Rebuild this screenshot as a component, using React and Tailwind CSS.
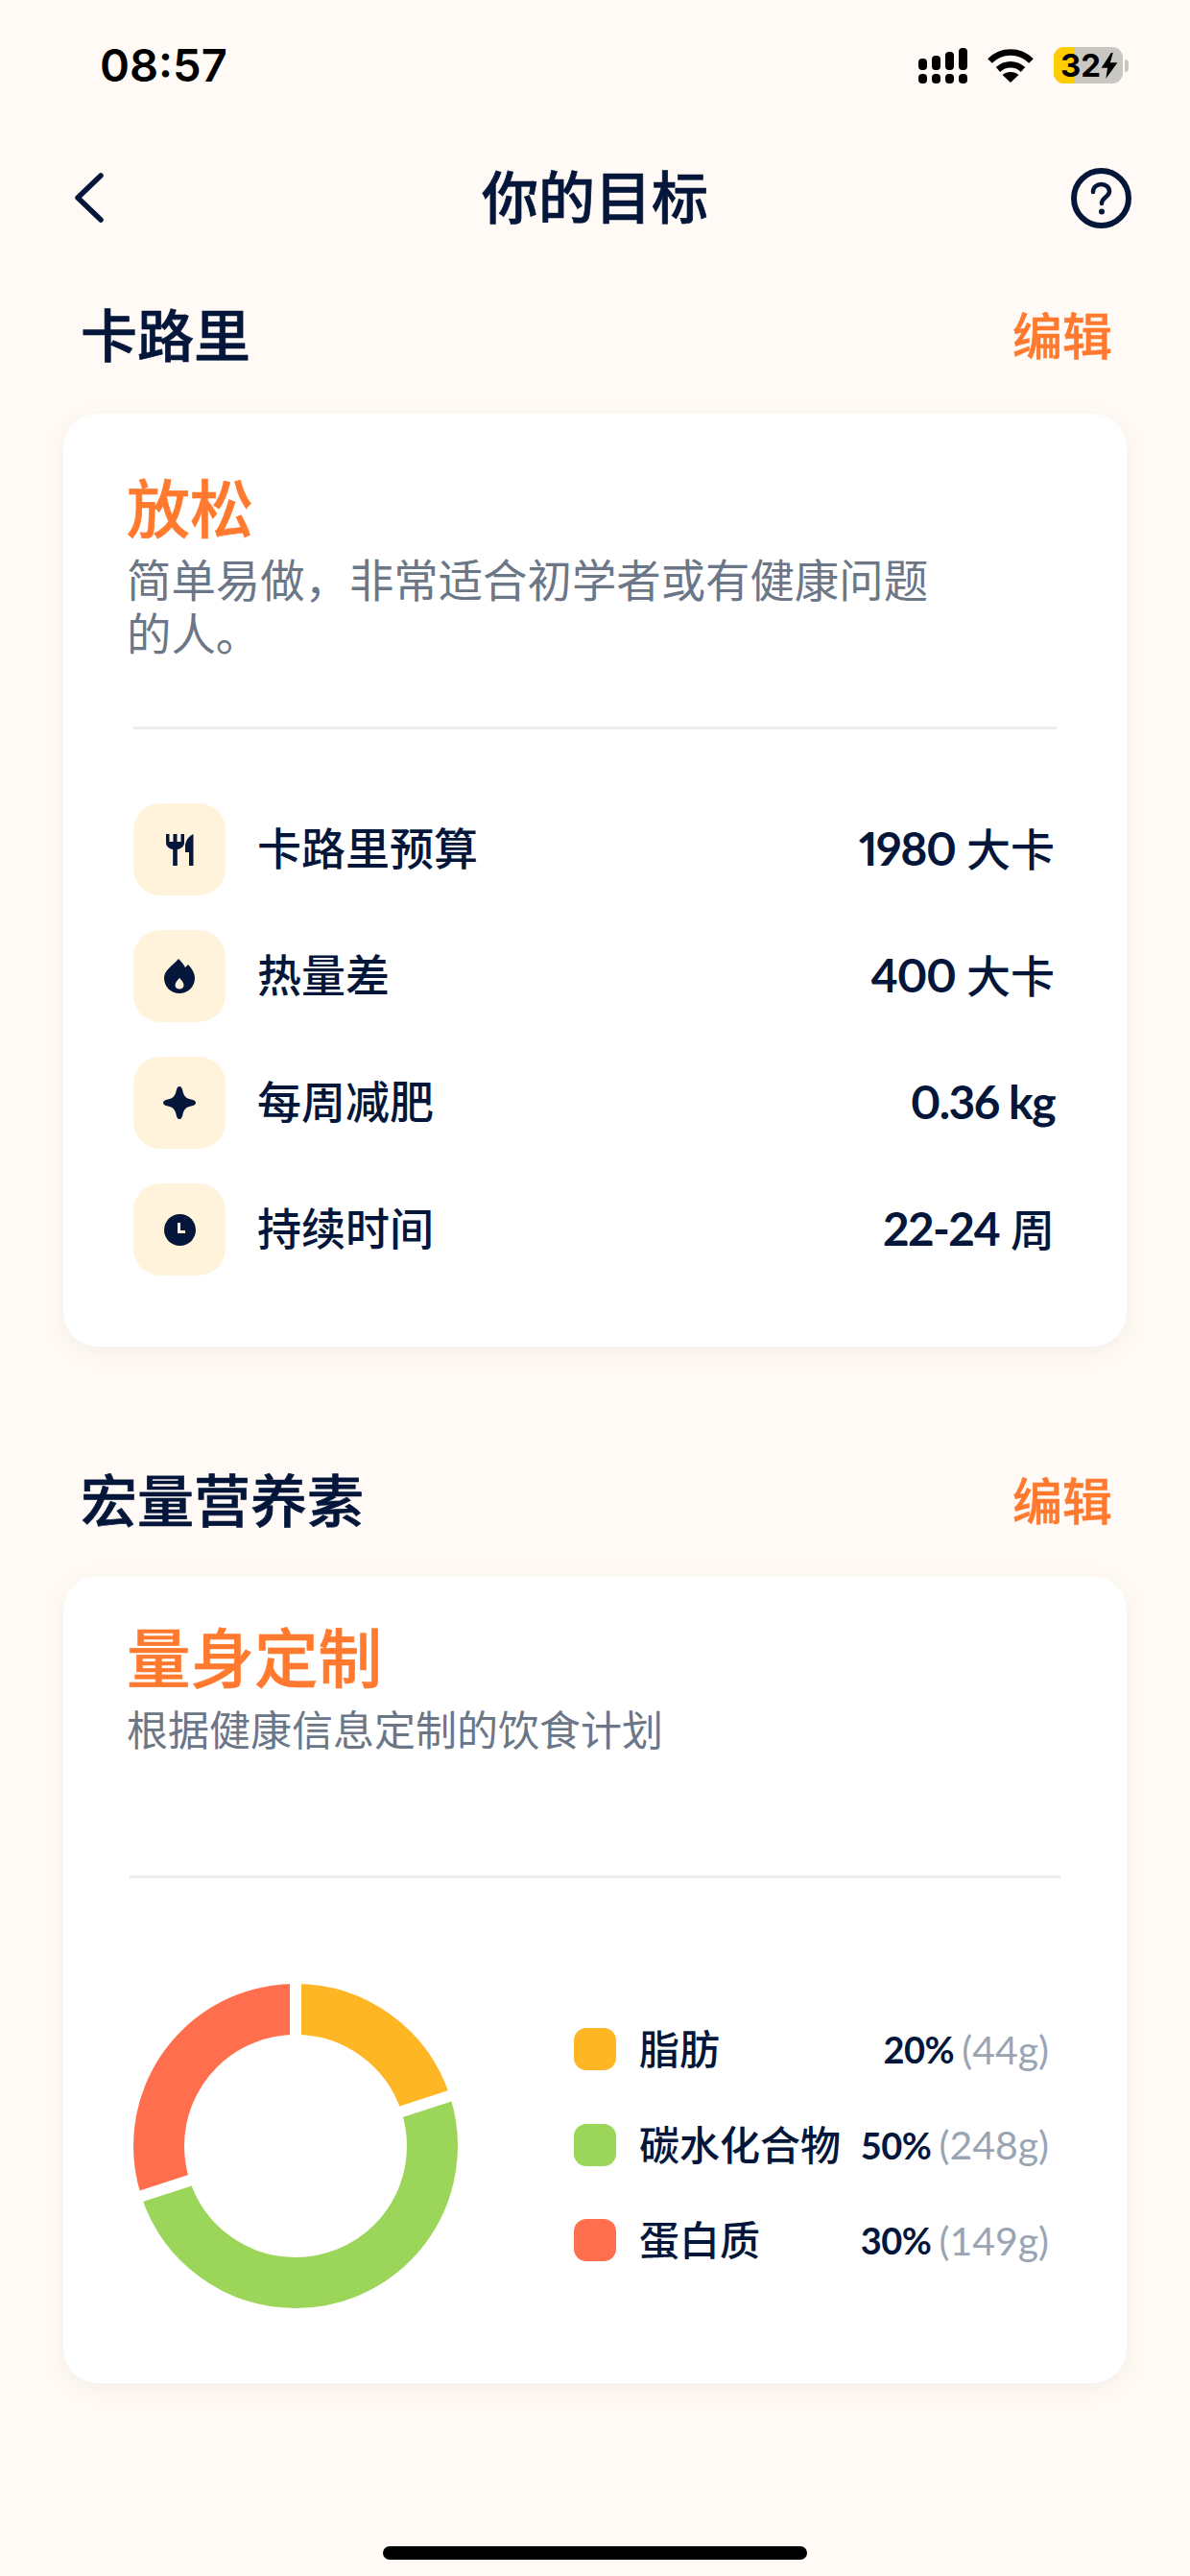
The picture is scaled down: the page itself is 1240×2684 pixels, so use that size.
const sans = "font-['Lato','Noto_Sans_CJK_SC',sans-serif]";

function SignalIcon() {
  return (
    <svg width="51" height="37" viewBox="0 0 51 37" fill="#000">
      <rect x="0" y="27" width="9" height="10" rx="4" />
      <rect x="14" y="27" width="9" height="10" rx="4" />
      <rect x="28" y="27" width="9" height="10" rx="4" />
      <rect x="42" y="27" width="9" height="10" rx="4" />
      <rect x="0" y="11" width="9" height="12" rx="4" />
      <rect x="14" y="8" width="9" height="15" rx="4" />
      <rect x="28" y="4" width="9" height="19" rx="4" />
      <rect x="42" y="0" width="9" height="23" rx="4" />
    </svg>
  );
}

function WifiIcon() {
  return (
    <svg width="48" height="36" viewBox="0 0 48 36" fill="none" stroke="#000" strokeWidth="6.5">
      <path d="M2.5 13.5C14.5 1.5 33.5 1.5 45.5 13.5" />
      <path d="M11 22.5C18.5 15.5 29.5 15.5 37 22.5" />
      <path d="M24 36L15.5 28C20 24 28 24 32.5 28Z" fill="#000" stroke="none" />
    </svg>
  );
}

function BatteryIcon() {
  return (
    <div className="flex items-center">
      <div className="relative flex h-[38px] w-[72px] items-center rounded-[11px] bg-[#c9c7c2]">
        <div className="h-full w-[22px] rounded-l-[11px] bg-[#ffcc00]" />
        <div className="absolute inset-0 flex items-center pl-[7px] font-['Inter',sans-serif] text-[33px] leading-none font-bold text-black">
          32
          <svg width="18" height="27" viewBox="0 0 18 29" fill="#000" className="shrink-0">
            <path d="M11 0L0 17H7L5 29L18 11H10L13 0Z" />
          </svg>
        </div>
      </div>
      <div className="ml-[2px] h-[13px] w-[4px] rounded-r-full bg-[#c9c7c2]" />
    </div>
  );
}

function ForkKnife() {
  return (
    <svg width="29" height="33" viewBox="0 0 29 33" fill="#04163a">
      <path d="M0 0H3.5V8H7.5V0H11.5V8H15.5V0H19V9C19 13 15.5 15.5 11.8 16V33H7.2V16C3.5 15.5 0 13 0 9Z" />
      <path d="M28.5 0V33H24V19H20V13C20 7 24 2 28.5 0Z" />
    </svg>
  );
}

function Flame() {
  return (
    <svg width="32" height="36" viewBox="0 0 32 36">
      <path
        fill="#04163a"
        d="M15 0C18 3 20.5 6 22 9L25 6C29.5 10.5 32 15.5 32 20C32 29 25 36 16 36C7 36 0 29 0 20C0 12 9 7 15 0Z"
      />
      <path fill="#fff3dc" d="M16 20C18 22.5 20.5 24.5 20.5 27.5C20.5 30 18.5 31.5 16 31.5C13.5 31.5 11.5 30 11.5 27.5C11.5 24.5 14 22.5 16 20Z" />
    </svg>
  );
}

function Sparkle() {
  return (
    <svg width="34" height="34" viewBox="0 0 34 34" fill="#04163a">
      <path d="M17 0C19 0 19.8 2 20.5 5C21.5 10 24 12.5 29 13.5C32 14.2 34 15 34 17C34 19 32 19.8 29 20.5C24 21.5 21.5 24 20.5 29C19.8 32 19 34 17 34C15 34 14.2 32 13.5 29C12.5 24 10 21.5 5 20.5C2 19.8 0 19 0 17C0 15 2 14.2 5 13.5C10 12.5 12.5 10 13.5 5C14.2 2 15 0 17 0Z" />
    </svg>
  );
}

function Clock() {
  return (
    <svg width="33" height="33" viewBox="0 0 33 33">
      <circle cx="16.5" cy="16.5" r="16.5" fill="#04163a" />
      <path d="M15.5 9V18.5H22" fill="none" stroke="#fff3dc" strokeWidth="3" />
    </svg>
  );
}

function Row({ icon, label, value, unit }) {
  return (
    <div className="flex items-center">
      <div className="flex h-[96px] w-[96px] items-center justify-center rounded-[28px] bg-[#fff3dc]">
        {icon}
      </div>
      <div className="ml-[33px] pb-[2px] text-[46px] leading-none font-medium text-[#04163a]">{label}</div>
      <div className="ml-auto pb-[2px] text-[48px] leading-none font-bold tracking-[-1.5px] text-[#04163a] proportional-nums">
        {value}
        {unit && <span className="text-[46px] font-medium tracking-normal"> {unit}</span>}
      </div>
    </div>
  );
}

function SectionHead({ title }) {
  return (
    <div className="flex items-center justify-between pr-[15px] pl-[18px]">
      <div className="text-[59px] leading-[70px] font-medium text-[#04163a] [-webkit-text-stroke:0.7px_#04163a]">{title}</div>
      <div className="text-[52px] leading-[70px] font-medium text-[#ff7a2f] [-webkit-text-stroke:0.5px_#ff7a2f]">编辑</div>
    </div>
  );
}

function Donut() {
  // segments: 20 / 50 / 30, white bars are the gaps
  const gaps = [0, 72, 252];
  return (
    <svg width="338" height="338" viewBox="0 0 338 338" fill="none">
      <g transform="rotate(-90 169 169)" strokeWidth="53">
        <circle cx="169" cy="169" r="142.5" stroke="#ffb624" pathLength="100" strokeDasharray="20 80" />
        <circle cx="169" cy="169" r="142.5" stroke="#9bd65a" pathLength="100" strokeDasharray="50 50" strokeDashoffset="-20" />
        <circle cx="169" cy="169" r="142.5" stroke="#ff6f4e" pathLength="100" strokeDasharray="30 70" strokeDashoffset="-70" />
      </g>
      {gaps.map((a) => (
        <line key={a} x1="169" y1="169" x2="169" y2="-3" stroke="#fff" strokeWidth="12" transform={`rotate(${a} 169 169)`} />
      ))}
    </svg>
  );
}

function LegendRow({ swatch, label, pct, grams }) {
  return (
    <div className="flex h-[44px] items-center">
      <div className={`h-[44px] w-[44px] rounded-[13px] ${swatch}`} />
      <div className="ml-[24px] text-[42px] leading-none font-medium text-[#04163a]">{label}</div>
      <div className="ml-auto text-[38px] leading-none font-bold tracking-[-0.5px] text-[#04163a]">{pct}</div>
      <div className="ml-[8px] text-[41px] leading-none font-normal text-[#9aa5b4]">{grams}</div>
    </div>
  );
}

export default function App() {
  return (
    <div className={`flex h-[2684px] w-[1240px] flex-col overflow-hidden bg-[#fffaf5] ${sans}`}>
      {/* status bar */}
      <div className="flex items-center justify-between pt-[48px] pr-[64px] pl-[104px]">
        <div className="font-['Inter',sans-serif] text-[47px] leading-[40px] font-semibold text-black">08:57</div>
        <div className="flex items-center gap-[21px]">
          <SignalIcon />
          <WifiIcon />
          <BatteryIcon />
        </div>
      </div>

      {/* nav */}
      <div className="mt-[86px] grid h-[64px] grid-cols-[1fr_auto_1fr] items-center pr-[61px] pl-[78px]">
        <svg width="30" height="52" viewBox="0 0 30 52" fill="none" stroke="#04163a" strokeWidth="5.5" strokeLinecap="round" strokeLinejoin="round">
          <path d="M27 3L3 26L27 49" />
        </svg>
        <div className="ml-[-17px] pb-[2px] text-[59px] leading-none font-medium text-[#04163a] [-webkit-text-stroke:0.7px_#04163a]">你的目标</div>
        <svg width="63" height="63" viewBox="0 0 63 63" fill="none" stroke="#04163a" strokeWidth="6" className="justify-self-end">
          <circle cx="31.5" cy="31.5" r="28.5" />
          <path d="M23 25C23 20 27 17 31.5 17C36 17 40 20 40 24.5C40 30 32 30.5 32 37" strokeWidth="4.5" strokeLinecap="round" />
          <circle cx="32" cy="45.5" r="3" fill="#04163a" stroke="none" />
        </svg>
      </div>

      {/* calorie section */}
      <div className="mt-[77px] px-[66px]">
        <SectionHead title="卡路里" />
        <div className="mt-[46px] h-[972px] rounded-[36px] bg-white px-[66px] pt-[64px] shadow-[0_6px_24px_rgba(120,90,50,0.07)]">
          <div className="text-[66px] leading-[70px] font-medium text-[#ff7a2f] [-webkit-text-stroke:0.6px_#ff7a2f]">放松</div>
          <div className="mt-[11px] w-[845px] text-[46.4px] leading-[56px] text-[#6b7787]">
            {"简单易做\uFF0C非常适合初学者或有健康问题的人。"}
          </div>
          <div className="mt-[69px] mr-[7px] ml-[7px] h-[3px] bg-[#ebeef0]" />
          <div className="mt-[77px] ml-[7px] flex flex-col gap-[36px] pr-[9px]">
            <Row icon={<ForkKnife />} label="卡路里预算" value="1980" unit="大卡" />
            <Row icon={<Flame />} label="热量差" value="400" unit="大卡" />
            <Row icon={<Sparkle />} label="每周减肥" value="0.36 kg" />
            <Row icon={<Clock />} label="持续时间" value="22-24" unit="周" />
          </div>
        </div>
      </div>

      {/* macro section */}
      <div className="mt-[126px] px-[66px]">
        <SectionHead title="宏量营养素" />
        <div className="mt-[43px] h-[841px] rounded-[36px] bg-white px-[66px] pt-[50px] shadow-[0_6px_24px_rgba(120,90,50,0.07)]">
          <div className="text-[66.5px] leading-[70px] font-medium text-[#ff7a2f] [-webkit-text-stroke:0.6px_#ff7a2f]">量身定制</div>
          <div className="mt-[16px] text-[43px] leading-[50px] text-[#6b7787]">根据健康信息定制的饮食计划</div>
          <div className="mt-[126px] mr-[3px] ml-[3px] h-[3px] bg-[#ebeef0]" />
          <div className="mt-[110px] ml-[7px] flex items-center">
            <Donut />
            <div className="mb-[3px] ml-[121px] flex flex-1 flex-col gap-[55.5px] pr-[15px]">
              <LegendRow swatch="bg-[#ffb624]" label="脂肪" pct="20%" grams="(44g)" />
              <LegendRow swatch="bg-[#9bd65a]" label="碳水化合物" pct="50%" grams="(248g)" />
              <LegendRow swatch="bg-[#ff6f4e]" label="蛋白质" pct="30%" grams="(149g)" />
            </div>
          </div>
        </div>
      </div>

      {/* home indicator */}
      <div className="mt-auto mb-[17px] h-[14px] w-[442px] self-center rounded-full bg-black" />
    </div>
  );
}
